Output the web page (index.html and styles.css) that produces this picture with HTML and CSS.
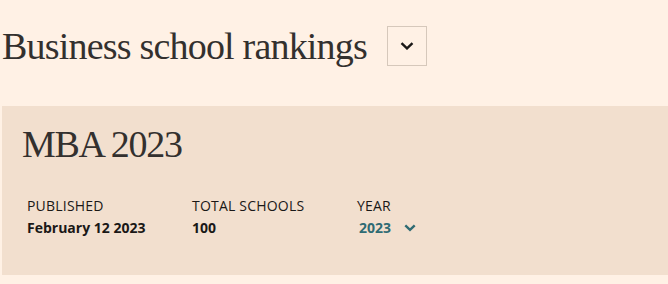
FILE: index.html
```html
<!DOCTYPE html>
<html lang="en">
<head>
    <meta charset="UTF-8">
    <meta name="viewport" content="width=device-width, initial-scale=1.0">
    <title>Business school rankings</title>
    <link rel="stylesheet" href="styles.css">
</head>
<body>

<div class="page">
    <div class="header">
        <h1 class="page-title">Business school rankings</h1>
        <button class="menu-btn" aria-label="Open menu">
            <svg width="14" height="8" viewBox="0 0 14 8"><path d="M1.5 1.2 L7 6.4 L12.5 1.2" fill="none" stroke="#1a1817" stroke-width="2.4"/></svg>
        </button>
    </div>

    <div class="panel">
        <h2 class="ranking-title">MBA 2023</h2>
        <div class="stats">
            <div class="stat">
                <div class="stat-label">PUBLISHED</div>
                <div class="stat-value">February 12 2023</div>
            </div>
            <div class="stat">
                <div class="stat-label">TOTAL SCHOOLS</div>
                <div class="stat-value">100</div>
            </div>
            <div class="stat year">
                <div class="stat-label">YEAR</div>
                <div class="stat-value year-select">
                    2023
                    <svg width="12" height="8" viewBox="0 0 12 8"><path d="M1.3 1.3 L6 5.8 L10.7 1.3" fill="none" stroke="#2f6b73" stroke-width="2.4"/></svg>
                </div>
            </div>
        </div>
    </div>
</div>

</body>
</html>
```

FILE: styles.css
```css
body {
    margin: 0;
    background-color: #fff1e5;
    color: #33302e;
    font-family: 'Open Sans', sans-serif;
}

.page {
    padding-left: 2px;
}

.header {
    display: flex;
    align-items: center;
    gap: 20px;
    height: 106px;
    padding-bottom: 14px;
    box-sizing: border-box;
}

.page-title {
    margin: 0;
    font-family: 'Liberation Serif', serif;
    font-weight: normal;
    font-size: 38px;
    letter-spacing: -0.8px;
    color: #33302e;
}

.menu-btn {
    width: 40px;
    height: 40px;
    display: flex;
    align-items: center;
    justify-content: center;
    background: transparent;
    border: 1px solid #d6c8bb;
    padding: 0;
}

.panel {
    background-color: #f2dfce;
    height: 169px;
    box-sizing: border-box;
    padding: 16px 20px 0 20px;
}

.ranking-title {
    margin: 0;
    font-family: 'Liberation Serif', serif;
    font-weight: normal;
    font-size: 38px;
    letter-spacing: -1.3px;
    color: #33302e;
}

.stats {
    display: flex;
    margin-top: 30px;
    padding-left: 5px;
}

.stat {
    width: 165px;
}

.stat-label {
    font-size: 14px;
    letter-spacing: 0.2px;
    line-height: 20px;
    color: #1a1817;
}

.stat-value {
    font-size: 14px;
    font-weight: bold;
    line-height: 20px;
    margin-top: 2px;
    color: #1a1817;
}

.year-select {
    display: flex;
    align-items: center;
    gap: 13px;
    color: #2f6b73;
    padding-left: 2px;
}
```
